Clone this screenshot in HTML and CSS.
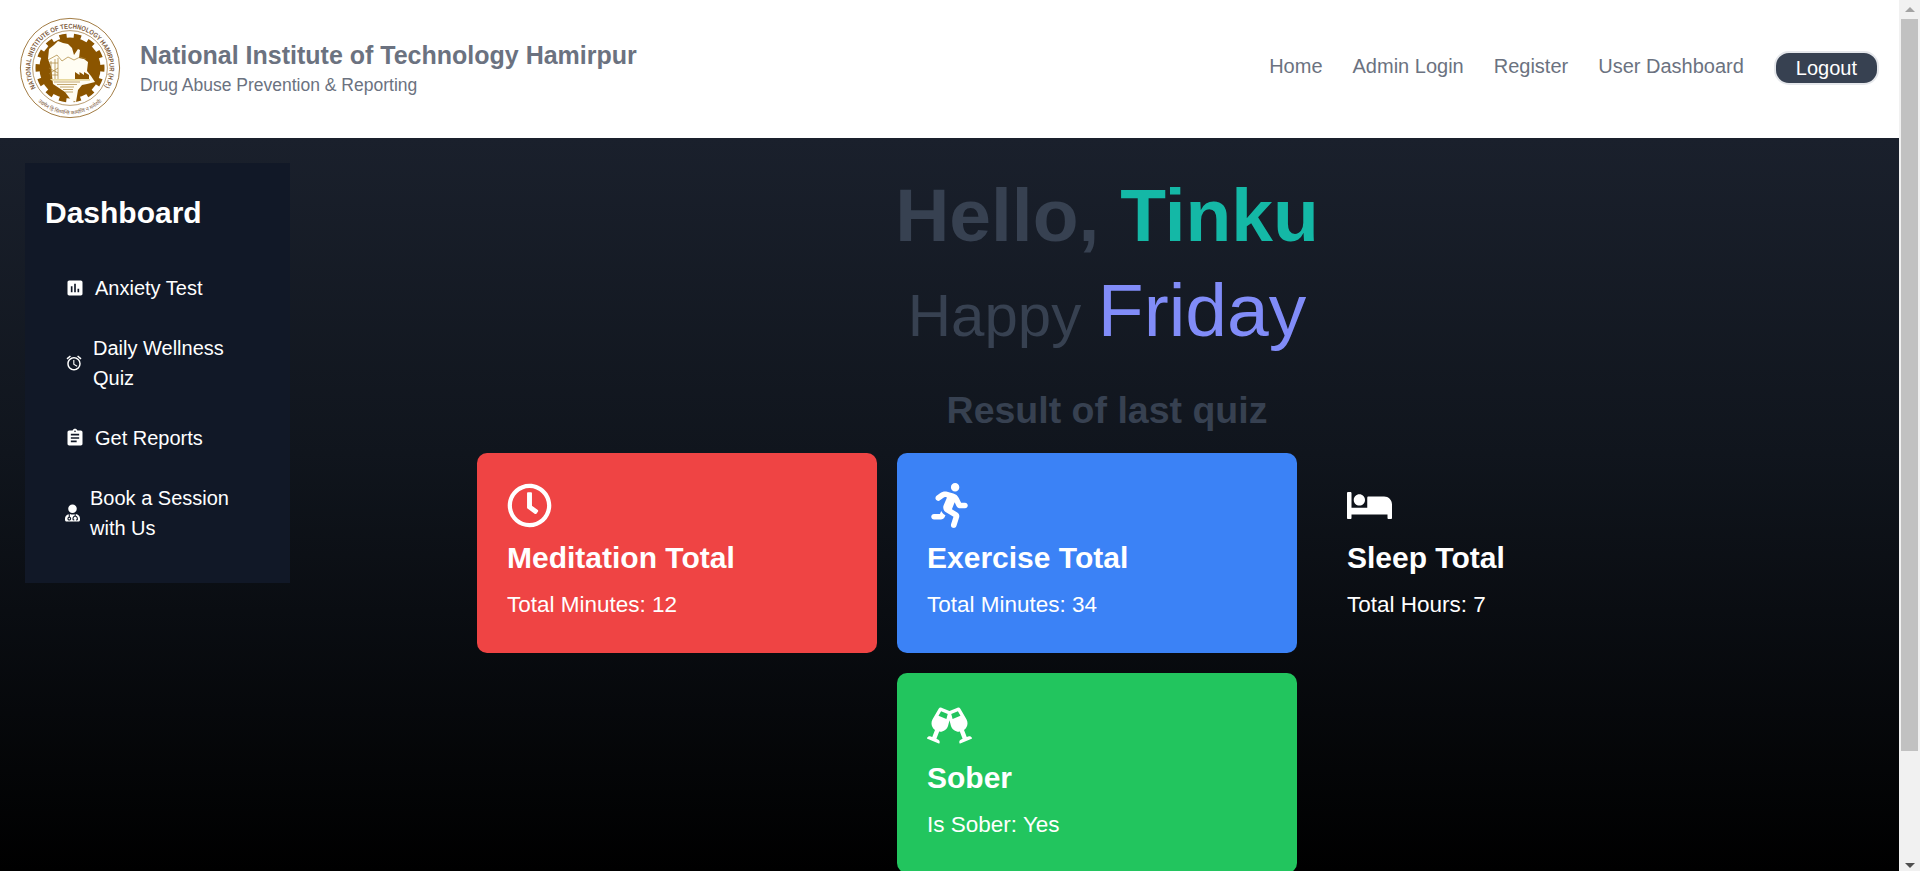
FILE: index.html
```html
<!DOCTYPE html>
<html lang="en">
<head>
<meta charset="utf-8">
<title>User Dashboard</title>
<link rel="stylesheet" href="styles.css">
</head>
<body>
<div class="page">
  <header class="header">
    <svg class="logo" viewBox="0 0 100 100">
      <defs>
        <path id="arc-top" d="M15.8 69.8A39.5 39.5 0 1 1 84.2 69.8"/>
        <path id="arc-bottom" d="M17 82.5A46.300 46.300 0 0 0 83 82.500"/>
      </defs>
      <g fill="none" stroke="#8a5a14">
        <circle cx="50" cy="50" r="49.6" stroke-width=".8"/>
        <circle cx="50" cy="50" r="37.4" stroke-width=".6"/>
      </g>
      <circle cx="50" cy="50" r="32" fill="none" stroke="#8b5500" stroke-width="5" stroke-dasharray="7.2 7.16" stroke-dashoffset="3.6"/>
      <circle cx="50" cy="50" r="30.6" fill="#8b5500"/>
      <path fill="#fffdf3" d="M29 31l5-4 4-4 5 2 5 1 4 4 2 7 4-6 2 1-1 8 5 1 4 3-1 9 4 5 4 6-8 2-5 1-4 5-2 12-5-2-6-8-12-8-2-17-3-8z"/>
      <path fill="none" stroke="#a98235" stroke-width=".7" d="M28 42l9-5 5 6 6-4 6 3 6-3 6 2M29 45h9M31 43v19M35 41v21M38 40v22M29 50l9 5M29 56l9-6M30 57h8M34 64h26M37 66.5h20M40 69h14M43 71.5h10M45 74h8"/>
      <path fill="#8b5500" d="M55 62v-8l4.5 3v-3l4.5 3v-3l5 3v5z"/>
      <path fill="#e8d9a0" d="M30 61h40v1.8H32z"/>
      <text class="logo-text"><textPath href="#arc-top" textLength="164" lengthAdjust="spacingAndGlyphs">NATIONAL INSTITUTE OF TECHNOLOGY HAMIRPUR (H.P.)</textPath></text>
      <text class="logo-motto"><textPath href="#arc-bottom" startOffset="50%">उद्यमेन हि सिध्यन्ति कार्याणि न मनोरथैः</textPath></text>
    </svg>
    <div class="brand">
      <div class="brand-name">National Institute of Technology Hamirpur</div>
      <div class="brand-sub">Drug Abuse Prevention &amp; Reporting</div>
    </div>
    <nav class="nav">
      <a>Home</a><a>Admin Login</a><a>Register</a><a>User Dashboard</a>
      <button class="logout">Logout</button>
    </nav>
  </header>
  <div class="body">
    <aside class="sidebar">
      <h2 class="sidebar-title">Dashboard</h2>
      <ul class="menu">
        <li><svg class="ic20" viewBox="0 0 24 24"><path d="M19 3H5c-1.1 0-2 .9-2 2v14c0 1.1.9 2 2 2h14c1.1 0 2-.9 2-2V5c0-1.1-.9-2-2-2zM9 17H7v-7h2v7zm4 0h-2V7h2v10zm4 0h-2v-4h2v4z"/></svg><span>Anxiety Test</span></li>
        <li><svg class="ic18" viewBox="0 0 24 24"><path d="M22 5.72l-4.6-3.86-1.29 1.53 4.6 3.86L22 5.72zM7.88 3.39L6.6 1.86 2 5.71l1.29 1.53 4.59-3.85zM12.5 8H11v6l4.75 2.85.75-1.23-4-2.37V8zM12 4c-4.97 0-9 4.03-9 9s4.02 9 9 9a9 9 0 000-18zm0 16c-3.87 0-7-3.13-7-7s3.13-7 7-7 7 3.13 7 7-3.13 7-7 7z"/></svg><span>Daily Wellness Quiz</span></li>
        <li><svg class="ic20" viewBox="0 0 24 24"><path d="M19 3h-4.18C14.4 1.84 13.3 1 12 1c-1.3 0-2.4.84-2.82 2H5c-1.1 0-2 .9-2 2v14c0 1.1.9 2 2 2h14c1.1 0 2-.9 2-2V5c0-1.1-.9-2-2-2zm-7 0c.55 0 1 .45 1 1s-.45 1-1 1-1-.45-1-1 .45-1 1-1zm2 14H7v-2h7v2zm3-4H7v-2h10v2zm0-4H7V7h10v2z"/></svg><span>Get Reports</span></li>
        <li><svg class="ic15" viewBox="0 0 448 512"><path d="M224 256c70.7 0 128-57.3 128-128S294.7 0 224 0 96 57.3 96 128s57.3 128 128 128zM104 424c0 13.3 10.7 24 24 24s24-10.7 24-24-10.7-24-24-24-24 10.7-24 24zm216-135.4v49c36.5 7.4 64 39.8 64 78.4v41.7c0 7.6-5.4 14.2-12.9 15.7l-32.2 6.4c-4.3.9-8.5-1.9-9.4-6.3l-3.1-15.7c-.9-4.3 1.9-8.6 6.3-9.4l19.3-3.9V416c0-62.8-96-65.1-96 1.9v26.7l19.3 3.9c4.3.9 7.1 5.1 6.3 9.4l-3.1 15.7c-.9 4.3-5.1 7.1-9.4 6.3l-31.2-4.2c-7.9-1.1-13.8-7.8-13.8-15.9V416c0-38.6 27.5-70.9 64-78.4v-45.2c-2.2.7-4.4 1.1-6.6 1.9-18 6.3-37.3 9.8-57.4 9.8s-39.4-3.5-57.4-9.8c-7.4-2.6-14.9-4.2-22.6-5.2v81.6c23.1 6.9 40 28.1 40 53.4 0 30.9-25.1 56-56 56s-56-25.1-56-56c0-25.3 16.9-46.5 40-53.4v-80.4C48.5 301 0 355.8 0 422.4v44.8C0 491.9 20.1 512 44.8 512h358.4c24.7 0 44.8-20.1 44.8-44.8v-44.8c0-72-56.8-130.3-128-133.8z"/></svg><span>Book a Session with Us</span></li>
      </ul>
    </aside>
    <main class="main">
      <h1 class="hello">Hello, <span class="name">Tinku</span></h1>
      <p class="happy">Happy <span class="day">Friday</span></p>
      <h2 class="result">Result of last quiz</h2>
      <div class="cards">
        <section class="card red">
          <svg viewBox="0 0 512 512"><path d="M256 8C119 8 8 119 8 256s111 248 248 248 248-111 248-248S393 8 256 8zm0 448c-110.5 0-200-89.5-200-200S145.5 56 256 56s200 89.5 200 200-89.5 200-200 200zm61.8-104.4l-84.9-61.7c-3.1-2.3-4.9-5.9-4.9-9.7V116c0-6.6 5.4-12 12-12h32c6.6 0 12 5.4 12 12v141.7l66.8 48.6c5.4 3.9 6.5 11.4 2.6 16.8L334.6 349c-3.9 5.3-11.4 6.5-16.8 2.6z"/></svg>
          <h3>Meditation Total</h3>
          <p>Total Minutes: 12</p>
        </section>
        <section class="card blue">
          <svg viewBox="0 0 416 512"><path d="M272 96c26.51 0 48-21.49 48-48S298.51 0 272 0s-48 21.49-48 48 21.49 48 48 48zM113.69 317.47l-14.8 34.52H32c-17.67 0-32 14.33-32 32s14.33 32 32 32h77.45c19.25 0 36.58-11.44 44.11-29.09l8.79-20.52-10.67-6.3c-17.32-10.23-30.06-25.37-37.99-42.61zM384 223.99h-44.03l-26.06-53.25c-12.5-25.55-35.45-44.23-61.78-50.94l-71.08-21.14c-28.3-6.8-57.77-.55-80.84 17.14l-39.67 30.41c-14.03 10.75-16.69 30.83-5.94 44.86s30.84 16.66 44.86 5.91l39.69-30.41c7.67-5.89 17.44-8 25.27-6.14l14.7 4.37-37.46 87.39c-12.62 29.48-1.31 64.01 26.3 80.31l84.98 50.17-27.47 87.73c-5.28 16.86 4.11 34.82 20.97 40.09 3.19 1 6.41 1.48 9.58 1.48 13.61 0 26.23-8.77 30.52-22.45l31.64-101.06c5.91-20.77-2.89-43.08-21.64-54.13l-61.24-36.14 31.31-78.28 20.27 41.43c8 16.34 24.92 26.89 43.11 26.89H384c17.67 0 32-14.33 32-32s-14.33-31.99-32-31.99z"/></svg>
          <h3>Exercise Total</h3>
          <p>Total Minutes: 34</p>
        </section>
        <section class="card">
          <svg viewBox="0 0 640 512"><path d="M176 256c44.11 0 80-35.89 80-80s-35.89-80-80-80-80 35.89-80 80 35.89 80 80 80zm352-128H304c-8.84 0-16 7.16-16 16v144H64V80c0-8.84-7.16-16-16-16H16C7.16 64 0 71.16 0 80v352c0 8.84 7.16 16 16 16h32c8.84 0 16-7.16 16-16v-48h512v48c0 8.84 7.16 16 16 16h32c8.84 0 16-7.16 16-16V240c0-61.86-50.14-112-112-112z"/></svg>
          <h3>Sleep Total</h3>
          <p>Total Hours: 7</p>
        </section>
        <section class="card green">
          <svg viewBox="0 0 640 512"><path d="M639.4 433.6c-8.4-20.4-31.8-30.1-52.2-21.6l-22.1 9.2-38.7-101.9c47.9-35 64.8-100.3 34.5-152.8L474.3 16c-8-13.9-25.1-19.7-40-13.6L320 49.8 205.7 2.4c-14.9-6.2-32-.3-40 13.6L79.1 166.5C48.9 219 65.7 284.3 113.6 319.2L74.9 421.1l-22.1-9.2c-20.4-8.5-43.7 1.2-52.2 21.6-1.7 4.1.2 8.8 4.3 10.5l162.3 67.4c4.1 1.7 8.7-.2 10.4-4.3 8.4-20.4-1.3-43.8-21.6-52.3l-22.1-9.2L173.3 342c4.4.5 8.8 1.3 13.1 1.3 51.7 0 99.4-33.1 113.4-85.3l20.2-75.4 20.2 75.4c14 52.2 61.7 85.3 113.4 85.3 4.3 0 8.7-.8 13.1-1.3L506 445.6l-22.1 9.2c-20.4 8.5-30.1 31.9-21.6 52.3 1.7 4.1 6.3 6 10.4 4.3L635 444c4.1-1.7 6.1-6.3 4.4-10.4zM275.9 162.1l-112.1-46.5 36.5-63.4 94.5 39.2-18.9 70.7zm88.2 0l-18.9-70.7 94.5-39.2 36.5 63.4-112.1 46.5z"/></svg>
          <h3>Sober</h3>
          <p>Is Sober: Yes</p>
        </section>
      </div>
    </main>
  </div>
</div>
<div class="scrollbar">
  <svg class="arrow up" viewBox="0 0 10 5"><path d="M0 5l5-5 5 5z"/></svg>
  <div class="thumb"></div>
  <svg class="arrow down" viewBox="0 0 10 5"><path d="M0 0l5 5 5-5z"/></svg>
</div>
</body>
</html>
```

FILE: styles.css
```css
* { box-sizing: border-box; margin: 0; padding: 0; }
html { overflow: hidden; }
body {
  display: flex;
  height: 871px;
  overflow: hidden;
  font-family: "Liberation Sans", Arial, sans-serif;
  font-size: 20px;
  line-height: 30px;
  background: #fff;
}
.page { width: 1899px; height: 871px; overflow: hidden; display: flex; flex-direction: column; }

.header { display: flex; height: 138px; flex: none; padding: 18px 20px 20px; background: #fff; color: #6b7280; }
.logo { width: 100px; height: 100px; margin-right: 20px; flex: none; overflow: visible; }
.logo-text { font: bold 6.8px "Liberation Sans", sans-serif; fill: #7d5a3c; }
.logo-motto { font: 5.2px "Noto Sans", "Noto Sans Devanagari", sans-serif; fill: #7d5a3c; text-anchor: middle; }
.brand { padding-top: 20px; }
.brand-name { font-size: 25px; font-weight: 700; line-height: 35px; }
.brand-sub { font-size: 17.5px; line-height: 25px; }
.nav { display: flex; gap: 30px; margin-left: auto; padding-top: 33px; align-items: flex-start; }
.logout {
  height: 34px; padding: 0 20px; border: 2px solid #e5e7eb; border-radius: 15px;
  background: #374151; color: #fff; font: 20px/30px "Liberation Sans", Arial, sans-serif;
}

.body { flex: none; display: flex; height: 733px; background: linear-gradient(#1a202c, #10151d 43%, #000); }
.sidebar { flex: none; width: 265px; height: 420px; margin: 25px; padding: 30px 20px; background: #111827; color: #fff; }
.sidebar-title { font-size: 30px; line-height: 40px; }
.menu { display: flex; flex-direction: column; gap: 30px; list-style: none; padding: 40px 20px 0; }
.menu li { display: flex; align-items: center; gap: 10px; }
.menu svg { flex: none; fill: #fff; }
.ic20 { width: 20px; height: 20px; }
.ic18 { width: 18px; height: 20px; }
.ic15 { width: 15px; height: 20px; }

.main { flex: 1; color: #374151; text-align: center; padding-top: 40px; }
.hello { font-size: 75px; line-height: 75px; }
.name { color: #14b8a6; }
.happy { font-size: 60px; line-height: 75px; margin-top: 20px; }
.day { color: #818cf8; font-size: 75px; }
.result { font-size: 37.5px; line-height: 45px; margin-top: 35px; }
.cards { display: flex; flex-wrap: wrap; justify-content: center; gap: 20px; width: 1240px; margin: 20px 0 0 162px; }
.card { width: 400px; height: 200px; padding: 30px; border-radius: 10px; color: #fff; text-align: left; }
.card svg { display: block; width: 45px; height: 45px; fill: #fff; }
.card h3 { font-size: 30px; line-height: 40px; margin-top: 10px; }
.card p { font-size: 22.5px; line-height: 35px; margin-top: 9px; }
.red { background: #ef4444; }
.blue { background: #3b82f6; }
.green { background: #22c55e; }

.scrollbar { width: 21px; height: 871px; background: #f1f1f1; display: flex; flex-direction: column; align-items: center; padding: 7px 0 3px; }
.arrow { width: 10px; height: 5px; flex: none; }
.up { fill: #a3a3a3; }
.down { fill: #505050; margin-top: auto; }
.thumb { width: 17px; height: 732px; margin-top: 7px; background: #c1c1c1; }
```
